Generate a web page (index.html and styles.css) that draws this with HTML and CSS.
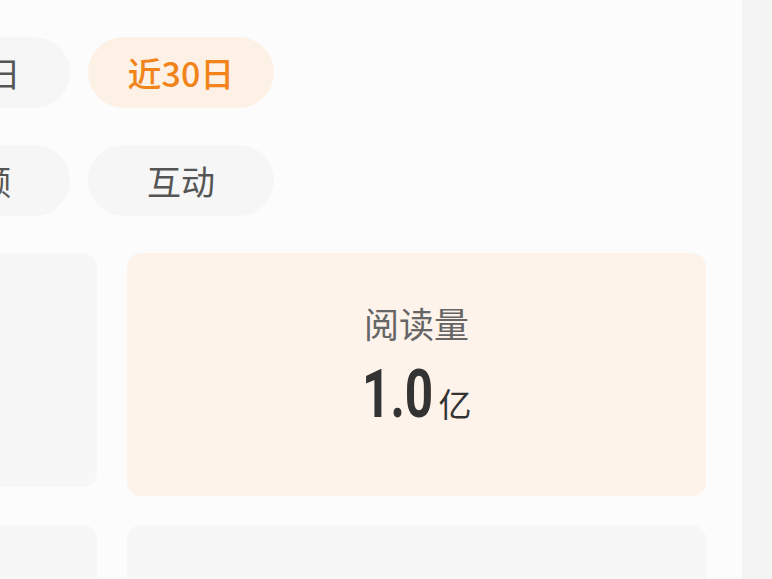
FILE: index.html
```html
<!DOCTYPE html>
<html lang="zh-CN">
<head>
<meta charset="utf-8">
<title>数据概览</title>
<link rel="stylesheet" href="styles.css">
</head>
<body>
<div class="page">
  <main class="content">
    <div class="pill-row first">
      <div class="pill">近7日</div>
      <div class="pill active">近30日</div>
    </div>
    <div class="pill-row">
      <div class="pill">视频</div>
      <div class="pill">互动</div>
    </div>
    <div class="cards">
      <div class="card short"></div>
      <div class="card active">
        <div class="label">阅读量</div>
        <div class="value"><span class="num">1.0</span><span class="unit">亿</span></div>
      </div>
      <div class="card"></div>
      <div class="card"></div>
    </div>
  </main>
  <aside class="side"></aside>
</div>
</body>
</html>
```
FILE: styles.css
```css
html, body {
  margin: 0;
  padding: 0;
  height: 100%;
  overflow: hidden;
}
body {
  background: #fcfcfc;
  font-family: "Noto Sans CJK SC", "Noto Sans", sans-serif;
}
.page {
  display: flex;
  height: 579px;
}
.content {
  width: 742px;
  flex: none;
  overflow: hidden;
  background: #fcfcfc;
}
.side {
  flex: 1;
  background: #f4f4f4;
}
.pill-row {
  display: flex;
  gap: 18px;
  margin-left: -116px;
  margin-top: 37px;
}
.pill {
  flex: none;
  width: 186px;
  height: 71px;
  border-radius: 36px;
  background: #f6f6f6;
  color: #555555;
  font-size: 34px;
  line-height: 71px;
  text-align: center;
}
.pill.active {
  background: #fdf1e5;
  color: #f0841b;
  font-weight: 500;
}
.cards {
  display: grid;
  grid-template-columns: 579px 579px;
  column-gap: 30px;
  row-gap: 29px;
  align-items: start;
  margin-top: 37px;
  margin-left: -482px;
}
.card {
  height: 243px;
  border-radius: 14px;
  background: #f7f7f7;
  box-sizing: border-box;
  display: flex;
  flex-direction: column;
  align-items: center;
}
.card.short {
  height: 234px;
}
.card.active {
  background: #fdf3ea;
  padding-top: 48px;
}
.label {
  font-size: 35px;
  line-height: 44px;
  color: #666666;
}
.value {
  margin-top: 15px;
  color: #333333;
  display: flex;
  align-items: baseline;
}
.num {
  display: inline-block;
  font-family: Roboto, "Liberation Sans", sans-serif;
  font-weight: 700;
  font-size: 66px;
  line-height: 70px;
  transform: scaleX(0.75);
  transform-origin: left center;
  margin-right: -20px;
}
.unit {
  font-size: 33px;
  margin-left: 2px;
}
```
